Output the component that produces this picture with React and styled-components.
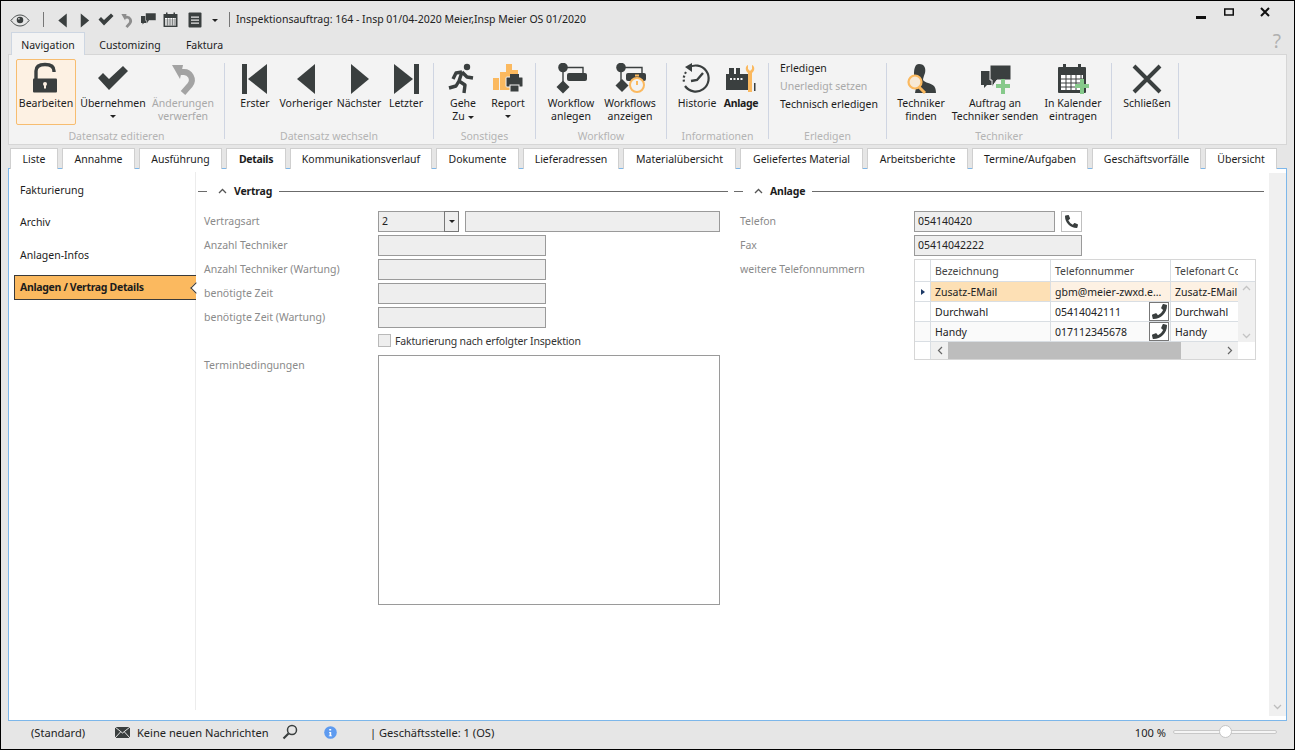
import React from 'react';
import styled, { createGlobalStyle } from 'styled-components';
import { FaPhoneAlt } from 'react-icons/fa';

const DARK = '#3a3f3f';
const ORANGE = '#fbb95f';
const GREEN = '#86c98a';

const Global = createGlobalStyle`
  html, body {
    margin: 0;
    padding: 0;
    overflow: hidden;
    background: #e6e6e6;
  }
  * {
    box-sizing: border-box;
  }
`;

const Window = styled.div`
  width: 1295px;
  height: 750px;
  border: 1px solid #000;
  background: #e6e6e6;
  display: flex;
  flex-direction: column;
  font-family: 'Noto Sans', 'Open Sans', sans-serif;
  font-size: 10.5px;
  color: #1c1c1c;
  overflow: hidden;
`;

const TitleBar = styled.div`
  height: 31px;
  flex: none;
  display: flex;
  align-items: center;
  padding-left: 8px;
`;
const QuickBtn = styled.span`
  display: flex;
  justify-content: center;
  align-items: center;
  width: ${(p) => p.$w || 22}px;
  height: 20px;
  margin-top: 7px;
`;
const TitleSep = styled.span`
  width: 1px;
  height: 15px;
  margin: 5px ${(p) => p.$r || 0}px 0 ${(p) => p.$l || 0}px;
  background: #777;
`;
const TitleText = styled.span`
  margin-top: 4px;
  font-size: 10.5px;
  color: #222;
`;
const WinButtons = styled.div`
  margin-left: auto;
  margin-right: 24px;
  margin-top: -9px;
  display: flex;
  align-items: center;
`;
const WinButton = styled.span`
  display: flex;
  margin-left: ${(p) => p.$l || 0}px;
`;

const MenuTabs = styled.div`
  height: 23px;
  flex: none;
  display: flex;
  align-items: stretch;
  padding-left: 10px;
  margin-bottom: -1px;
  z-index: 1;
`;
const MenuTab = styled.div`
  width: ${(p) => p.$w}px;
  display: flex;
  align-items: center;
  justify-content: center;
  padding-top: 2px;
  background: ${(p) => (p.$active ? '#f3f3f3' : 'transparent')};
  border: 1px solid ${(p) => (p.$active ? '#cdd6e2' : 'transparent')};
  border-bottom: none;
`;
const Help = styled.span`
  margin-left: auto;
  margin-right: 13px;
  margin-top: -4px;
  color: #b0b0b0;
  font-size: 19px;
`;

const Ribbon = styled.div`
  height: 91px;
  flex: none;
  margin: 0 7px;
  background: #f3f3f3;
  border: 1px solid #d6d6d6;
  display: flex;
`;
const Group = styled.div`
  width: ${(p) => p.$w}px;
  display: flex;
  flex-direction: column;
  padding-top: 4px;
`;
const GroupButtons = styled.div`
  flex: 1;
  display: flex;
  align-items: flex-start;
  padding-left: ${(p) => p.$pl || 0}px;
  gap: ${(p) => p.$gap || 0}px;
`;
const GroupLabel = styled.div`
  height: 15px;
  text-align: center;
  color: #b4b4b4;
`;
const GroupSep = styled.div`
  width: 1px;
  flex: none;
  margin: 8px 0 5px;
  background: #cfd5e2;
`;
const RibbonBtn = styled.div`
  width: ${(p) => p.$w}px;
  height: 66px;
  display: flex;
  flex-direction: column;
  align-items: center;
  text-align: center;
  line-height: 13px;
  border: 1px solid ${(p) => (p.$active ? '#f7bd70' : 'transparent')};
  border-radius: 2px;
  background: ${(p) => (p.$active ? '#fdf1e3' : 'transparent')};
  color: ${(p) => (p.$disabled ? '#a9a9a9' : '#1c1c1c')};
  font-weight: ${(p) => (p.$bold ? 700 : 400)};
  letter-spacing: ${(p) => (p.$bold ? '-0.3px' : 'normal')};
  white-space: nowrap;
`;
const IconSlot = styled.div`
  height: 37px;
  flex: none;
  display: flex;
  align-items: center;
  justify-content: center;
`;
const Caret = styled.span`
  display: inline-block;
  width: 0;
  height: 0;
  border: 3px solid transparent;
  border-top: 3px solid #222;
  border-bottom: none;
  margin: ${(p) => p.$m || '0'};
  vertical-align: middle;
`;
const TextActions = styled.div`
  flex: 1;
  display: flex;
  flex-direction: column;
  padding-left: 11px;
`;
const TextAction = styled.div`
  height: 18px;
  line-height: 18px;
  color: ${(p) => (p.$disabled ? '#a9a9a9' : '#1c1c1c')};
`;

const DocTabs = styled.div`
  height: 24px;
  flex: none;
  display: flex;
  gap: 4px;
  padding: 3px 0 0 9px;
  margin-bottom: -1px;
  z-index: 1;
`;
const DocTab = styled.div`
  width: ${(p) => p.$w}px;
  display: flex;
  align-items: center;
  justify-content: center;
  background: #fff;
  border: 1px solid #cfcfcf;
  border-bottom: none;
  font-weight: ${(p) => (p.$active ? 700 : 400)};
  letter-spacing: ${(p) => (p.$active ? '-0.3px' : 'normal')};
`;

const Panel = styled.div`
  flex: 1;
  min-height: 0;
  margin: 0 7px;
  background: #fff;
  border: 1px solid #7db7ea;
  display: flex;
`;
const Sidebar = styled.div`
  width: 187px;
  flex: none;
  margin: 3px 0 10px;
  padding: 5px 0 0 5px;
  border-right: 1px solid #ececec;
  display: flex;
  flex-direction: column;
  gap: 7.5px;
`;
const SideItem = styled.div`
  height: 25px;
  display: flex;
  align-items: center;
  padding-left: 6px;
  position: relative;
  margin-right: -1px;
  ${(p) =>
    p.$active &&
    `
    background: ${ORANGE};
    border: 1px solid #3a3a3a;
    border-right: none;
    padding-left: 5px;
    font-weight: 700;
    letter-spacing: -0.32px;
    &::after {
      content: '';
      position: absolute;
      right: -4px;
      top: 8px;
      width: 7px;
      height: 7px;
      background: #fff;
      border-left: 1px solid #3a3a3a;
      border-bottom: 1px solid #3a3a3a;
      transform: rotate(45deg);
    }
  `}
`;
const Content = styled.div`
  flex: 1;
  display: flex;
  padding: 14px 0 0 2px;
  gap: 6px;
`;
const Section = styled.div`
  width: 530px;
  flex: none;
`;
const SectionHead = styled.div`
  display: flex;
  align-items: center;
  height: 16px;
  font-weight: 700;
  letter-spacing: -0.2px;
  margin-bottom: 12px;
  &::before {
    content: '';
    width: 9px;
    height: 1px;
    background: #6b6b6b;
  }
  &::after {
    content: '';
    flex: 1;
    height: 1px;
    background: #6b6b6b;
  }
`;
const Chevron = styled.span`
  display: flex;
  margin: 0 7px 0 11px;
`;
const HeadText = styled.span`
  margin-right: 7px;
`;
const FormBody = styled.div`
  padding-left: 6px;
  display: flex;
  flex-direction: column;
  gap: 3px;
`;
const Row = styled.div`
  display: flex;
  min-height: 21px;
`;
const Label = styled.div`
  width: 174px;
  flex: none;
  color: #8a8a8a;
  line-height: 21px;
`;
const Input = styled.div`
  width: ${(p) => p.$w}px;
  height: ${(p) => p.$h || 21}px;
  flex: none;
  padding-left: 3px;
  line-height: 19px;
  background: ${(p) => (p.$white ? '#fff' : '#eeeeee')};
  border: 1px solid #9a9a9a;
  color: #222;
`;
const ComboArrow = styled.div`
  width: 15px;
  height: 21px;
  flex: none;
  margin-left: -1px;
  margin-right: 6px;
  background: #eee;
  border: 1px solid #777;
  display: flex;
  align-items: center;
  justify-content: center;
`;
const CheckRow = styled.div`
  display: flex;
  align-items: center;
  gap: 4px;
  margin: 2px 0 4px 174px;
  height: 15px;
  color: #333;
  letter-spacing: -0.16px;
`;
const CheckBox = styled.span`
  width: 13px;
  height: 13px;
  background: #eee;
  border: 1px solid #b9b9b9;
`;
const PhoneBtn = styled.div`
  width: 21px;
  height: 21px;
  margin-left: 6px;
  background: #fff;
  border: 1px solid #bfbfbf;
  display: flex;
  align-items: center;
  justify-content: center;
`;
const PhoneIcon = styled(FaPhoneAlt)`
  color: ${DARK};
  transform: ${(p) => (p.$flip ? 'scaleX(-1)' : 'none')};
`;

const Grid = styled.div`
  width: 342px;
  border: 1px solid #d6d6d6;
  display: flex;
  background: #fff;
`;
const GridMain = styled.div`
  width: 323px;
  flex: none;
`;
const GridRow = styled.div`
  display: flex;
  height: ${(p) => p.$h || 20}px;
  border-bottom: 1px solid #d9dee3;
  background: ${(p) => p.$bg || '#fff'};
`;
const Cell = styled.div`
  width: ${(p) => p.$w}px;
  flex: none;
  display: flex;
  align-items: center;
  padding-left: ${(p) => (p.$head ? 0 : 4)}px;
  border-right: ${(p) => (p.$last ? 'none' : '1px solid #d9dee3')};
  background: ${(p) => p.$bg || 'transparent'};
  color: ${(p) => p.$color || '#222'};
  overflow: hidden;
  white-space: nowrap;
  justify-content: ${(p) => (p.$head ? 'center' : 'space-between')};
`;
const CellPhone = styled.span`
  width: 20px;
  height: 19px;
  margin-right: 1px;
  flex: none;
  background: #fff;
  border: 1px solid #777;
  display: flex;
  align-items: center;
  justify-content: center;
`;
const Pointer = styled.span`
  width: 0;
  height: 0;
  border: 3.5px solid transparent;
  border-left: 4px solid #1d3a66;
  border-right: none;
`;
const HScroll = styled.div`
  height: 17px;
  display: flex;
`;
const HCorner = styled.div`
  width: 16px;
  flex: none;
  border-right: 1px solid #d9dee3;
`;
const HTrack = styled.div`
  flex: 1;
  display: flex;
  align-items: center;
  background: #f0f0f0;
`;
const HArrow = styled.span`
  width: 17px;
  flex: none;
  display: flex;
  justify-content: center;
`;
const HThumb = styled.div`
  width: 233px;
  height: 100%;
  margin-right: auto;
  background: #bdbdbd;
`;
const VScroll = styled.div`
  flex: 1;
  display: flex;
  flex-direction: column;
`;
const VHead = styled.div`
  height: 22px;
  border-bottom: 1px solid #d9dee3;
`;
const VTrack = styled.div`
  flex: 1;
  background: #f0f0f0;
  display: flex;
  flex-direction: column;
  justify-content: space-between;
  align-items: center;
  padding: 3px 0;
`;
const VCorner = styled.div`
  height: 17px;
`;
const PanelScroll = styled.div`
  width: 17px;
  flex: none;
  margin: 4px 0;
  background: #f0f0f0;
  display: flex;
  flex-direction: column;
  justify-content: flex-end;
  align-items: center;
  padding-bottom: 6px;
`;

const StatusBar = styled.div`
  height: 28px;
  flex: none;
  display: flex;
  align-items: center;
  padding: 0 17px 6px 30px;
  color: #222;
  font-size: 11.1px;
`;
const StatusItem = styled.div`
  display: flex;
  align-items: center;
  width: ${(p) => (p.$w ? `${p.$w}px` : 'auto')};
  flex: none;
  gap: 7px;
`;
const Zoom = styled.div`
  margin-left: auto;
  display: flex;
  align-items: center;
  gap: 7px;
`;
const Slider = styled.div`
  width: 104px;
  height: 4px;
  border: 1px solid #c8c8c8;
  border-radius: 2px;
  background: #f5f5f5;
  position: relative;
`;
const Thumb = styled.span`
  position: absolute;
  left: 45px;
  top: -6px;
  width: 13px;
  height: 13px;
  border-radius: 50%;
  background: #fff;
  border: 1px solid #c4c4c4;
`;

const Svg = ({ s = 32, w, h, vb = '0 0 32 32', children }) => (
  <svg width={w || s} height={h || s} viewBox={vb} aria-hidden="true">
    {children}
  </svg>
);

const EyeIcon = () => (
  <Svg w={20} h={13} vb="0 0 22 14">
    <path d="M1 7C5 2 8 1 11 1s6 1 10 6c-4 5-7 6-10 6S5 12 1 7z" fill="none" stroke={DARK} strokeWidth="1" />
    <circle cx="11" cy="6.5" r="3.6" fill={DARK} />
    <circle cx="9.8" cy="5.2" r="0.9" fill="#e6e6e6" />
  </Svg>
);
const TriLeft = ({ s = 32 }) => (
  <Svg s={s}>
    <polygon points="25,1 25,31 7,16" fill={DARK} />
  </Svg>
);
const TriRight = ({ s = 32 }) => (
  <Svg s={s}>
    <polygon points="8,1 8,31 26,16" fill={DARK} />
  </Svg>
);
const First = () => (
  <Svg>
    <rect x="3" y="1" width="5" height="30" fill={DARK} />
    <polygon points="28,1 28,31 9,16" fill={DARK} />
  </Svg>
);
const Last = () => (
  <Svg>
    <rect x="24" y="1" width="5" height="30" fill={DARK} />
    <polygon points="4,1 4,31 23,16" fill={DARK} />
  </Svg>
);
const Check = ({ s = 32 }) => (
  <Svg s={s}>
    <polygon points="1,15 6,10 12,16 26,3 31,8 12,27" fill={DARK} />
  </Svg>
);
const Undo = ({ s = 32, c = '#a3a3a3' }) => (
  <Svg s={s}>
    <path d="M11 9h5a8 8 0 0 1 7 13l-7 8" fill="none" stroke={c} strokeWidth="6" />
    <polygon points="5,2 16,2 13,16" fill={c} />
  </Svg>
);
const Chat = ({ s = 32, plus }) => (
  <Svg s={s}>
    <path d="M2 8h13v14H8l-3 3v-3H2z" fill={DARK} />
    <path d="M11 2h21v15H18l-5 7v-7h-2z" fill={DARK} stroke="#f3f3f3" strokeWidth="1" />
    {plus && <path d="M22 16h4v5h5v4h-5v6h-4v-6h-5v-4h5z" fill={GREEN} />}
  </Svg>
);
const Calendar = ({ s = 32, plus }) => (
  <Svg s={s}>
    <rect x="1" y="4" width="28" height="26" rx="1" fill={DARK} />
    <rect x="6" y="1" width="3" height="5" fill={DARK} />
    <rect x="21" y="1" width="3" height="5" fill={DARK} />
    <path d="M4 12h22v15H4z" fill="#fff" />
    <path d="M4 16h22M4 20h22M4 24h22M9 12v15M14 12v15M19 12v15M24 12v15" stroke={DARK} strokeWidth="1" />
    {plus && <path d="M23 16h4v5h5v4h-5v6h-4v-6h-5v-4h5z" fill={GREEN} />}
  </Svg>
);
const ListDoc = ({ s = 16 }) => (
  <Svg s={s}>
    <rect x="3" y="1" width="26" height="30" rx="2" fill={DARK} />
    <path d="M8 10h16M8 16h16M8 22h16" stroke="#e6e6e6" strokeWidth="2.5" />
  </Svg>
);
const Lock = () => (
  <Svg s={34} vb="0 0 34 34">
    <path d="M7 17V9c0-4 3-6.5 9-6.5s9 2.5 9 6.5v1" fill="none" stroke={DARK} strokeWidth="3.4" />
    <rect x="4" y="16.5" width="24" height="14" rx="1" fill={DARK} />
    <circle cx="16" cy="22" r="2" fill="#fdf1e3" />
    <rect x="15" y="22" width="2" height="4.5" fill="#fdf1e3" />
  </Svg>
);
const Runner = () => (
  <Svg>
    <circle cx="20" cy="4" r="3.2" fill={DARK} />
    <path d="M15 9l-3 9 6 4 -1 8M12 18l-3 5-7 2M15 9l5 5 6 1M15 9l-6 1-3 6" fill="none" stroke={DARK} strokeWidth="3.4" strokeLinejoin="round" />
  </Svg>
);
const Report = () => (
  <Svg>
    <rect x="1" y="15" width="6" height="12" fill={ORANGE} />
    <rect x="8" y="9" width="6" height="18" fill={ORANGE} />
    <rect x="14" y="1" width="6" height="26" fill={ORANGE} />
    <rect x="20" y="7" width="6" height="6" fill={ORANGE} />
    <rect x="14" y="14" width="17" height="10" rx="1" fill={DARK} stroke="#f3f3f3" />
    <rect x="18" y="11" width="9" height="4" fill={DARK} />
    <rect x="18" y="22" width="9" height="7" fill={DARK} stroke="#f3f3f3" />
  </Svg>
);
const FlowNew = () => (
  <Svg>
    <path d="M8 4.5V24M8 4.5H28V11" fill="none" stroke={DARK} strokeWidth="1.4" />
    <circle cx="8" cy="4.5" r="4.8" fill={DARK} />
    <rect x="12" y="10" width="20" height="8" rx="2" fill={DARK} />
    <polygon points="8,17.5 14.5,24 8,30.5 1.5,24" fill={DARK} />
  </Svg>
);
const FlowShow = () => (
  <Svg>
    <path d="M7 4.5V22M7 4.5H28V11" fill="none" stroke={DARK} strokeWidth="1.4" />
    <circle cx="7" cy="4.5" r="4.8" fill={DARK} />
    <rect x="12" y="10" width="20" height="8" rx="2" fill={DARK} />
    <polygon points="8,16 14.5,22.5 8,29 1.5,22.5" fill={DARK} />
    <circle cx="23" cy="22" r="7" fill="#f3f3f3" stroke={ORANGE} strokeWidth="2" />
    <path d="M23 22v-4M21 12.5h4" fill="none" stroke={ORANGE} strokeWidth="2" />
  </Svg>
);
const History = () => (
  <Svg>
    <path d="M7 5a13 13 0 1 1-3 18" fill="none" stroke={DARK} strokeWidth="2.2" />
    <path d="M5 9a13 13 0 0 0-2 10" fill="none" stroke={DARK} strokeWidth="2.2" strokeDasharray="2 2" />
    <polygon points="11,0 11,9 4,4" fill={DARK} />
    <path d="M22 10l-6 7-6 1" fill="none" stroke={DARK} strokeWidth="2.4" />
  </Svg>
);
const Machine = () => (
  <Svg>
    <rect x="4" y="5" width="5" height="6" fill={DARK} />
    <rect x="11" y="5" width="4" height="6" fill={DARK} />
    <rect x="1" y="11" width="22" height="16" fill={DARK} />
    <path d="M5 16h14" stroke="#f3f3f3" strokeWidth="2" strokeDasharray="2 1.5" />
    <path d="M27 2v4l-2 2-2-2V2c-3 1-3 6 0 8v19h4V10c3-2 3-7 0-8z" fill={ORANGE} />
    <rect x="29" y="20" width="1.5" height="8" fill={DARK} />
  </Svg>
);
const Person = () => (
  <Svg>
    <path d="M14 1c6 0 7 5 6 9-1 3-2 5-2 7 2 3 8 3 11 6 2 2 2 7 2 7H10l2-11c-2-2-3-5-3-8 0-5 1-10 5-10z" fill={DARK} />
    <circle cx="10" cy="19" r="6.5" fill="#f7e9d6" stroke={ORANGE} strokeWidth="2.2" />
    <path d="M14 24l6 6" stroke={ORANGE} strokeWidth="3" />
  </Svg>
);
const Cross = () => (
  <Svg>
    <path d="M3 3l26 26M29 3L3 29" stroke={DARK} strokeWidth="4" />
  </Svg>
);
const ChevUp = ({ c = '#555', flip }) => (
  <Svg w={9} h={6} vb="0 0 9 6">
    <path d={flip ? 'M1 1l3.5 3.5L8 1' : 'M1 5l3.5-3.5L8 5'} fill="none" stroke={c} strokeWidth="1.3" />
  </Svg>
);
const ChevSide = ({ right }) => (
  <Svg w={6} h={9} vb="0 0 6 9">
    <path d={right ? 'M1 1l3.5 3.5L1 8' : 'M5 1L1.5 4.5 5 8'} fill="none" stroke="#666" strokeWidth="1.2" />
  </Svg>
);
const Mail = () => (
  <Svg w={15} h={11} vb="0 0 15 11">
    <rect width="15" height="11" fill={DARK} />
    <path d="M0 0l7.5 6L15 0M0 11l5.5-6M15 11L9.5 5" fill="none" stroke="#e6e6e6" strokeWidth="1" />
  </Svg>
);
const Search = () => (
  <Svg s={16} vb="0 0 16 16">
    <circle cx="10" cy="6" r="4.5" fill="none" stroke={DARK} strokeWidth="1.5" />
    <path d="M6.5 9.5L1.5 14.5" stroke={DARK} strokeWidth="2.2" />
  </Svg>
);
const Info = () => (
  <Svg s={13} vb="0 0 13 13">
    <circle cx="6.5" cy="6.5" r="6.3" fill="#5e9bf0" />
    <path d="M5.2 3h2v1.5h-2zM5 6h2.2v3.5H8v.8H4.8v-.8h.8V6.8H5z" fill="#fff" />
  </Svg>
);

const buttons = {
  edit: [
    { w: 60, icon: <Lock />, label: 'Bearbeiten', active: true },
    { w: 66, icon: <Check />, label: 'Übernehmen', caret: true },
    { w: 66, icon: <Undo />, label: 'Änderungen\nverwerfen', disabled: true },
  ],
  nav: [
    { w: 50, icon: <First />, label: 'Erster' },
    { w: 52, icon: <TriLeft />, label: 'Vorheriger' },
    { w: 54, icon: <TriRight />, label: 'Nächster' },
    { w: 40, icon: <Last />, label: 'Letzter' },
  ],
  misc: [
    { w: 44, icon: <Runner />, label: 'Gehe', second: 'Zu' },
    { w: 46, icon: <Report />, label: 'Report', caret: true },
  ],
  flow: [
    { w: 58, icon: <FlowNew />, label: 'Workflow\nanlegen' },
    { w: 60, icon: <FlowShow />, label: 'Workflows\nanzeigen' },
  ],
  info: [
    { w: 46, icon: <History />, label: 'Historie' },
    { w: 42, icon: <Machine />, label: 'Anlage', bold: true },
  ],
  tech: [
    { w: 56, icon: <Person />, label: 'Techniker\nfinden' },
    { w: 92, icon: <Chat plus />, label: 'Auftrag an\nTechniker senden' },
    { w: 64, icon: <Calendar plus />, label: 'In Kalender\neintragen' },
  ],
  close: [{ w: 60, icon: <Cross />, label: 'Schließen' }],
};

const docTabs = [
  ['Liste', 48],
  ['Annahme', 73],
  ['Ausführung', 83],
  ['Details', 60, true],
  ['Kommunikationsverlauf', 142],
  ['Dokumente', 83],
  ['Lieferadressen', 96],
  ['Materialübersicht', 113],
  ['Geliefertes Material', 123],
  ['Arbeitsberichte', 101],
  ['Termine/Aufgaben', 116],
  ['Geschäftsvorfälle', 109],
  ['Übersicht', 72],
];

const phoneRows = [
  { name: 'Durchwahl', number: '05414042111', kind: 'Durchwahl', bg: '#fff' },
  { name: 'Handy', number: '017112345678', kind: 'Handy', bg: '#fafafa' },
];

const RibbonButtons = ({ items }) =>
  items.map((b) => (
    <RibbonBtn key={b.label} $w={b.w} $active={b.active} $disabled={b.disabled} $bold={b.bold}>
      <IconSlot>{b.icon}</IconSlot>
      {b.label.split('\n').map((l) => (
        <div key={l}>{l}</div>
      ))}
      {b.second && (
        <div>
          {b.second}
          <Caret $m="0 0 0 3px" />
        </div>
      )}
      {b.caret && <Caret $m="5px 0 0" />}
    </RibbonBtn>
  ));

const App = () => (
  <>
    <Global />
    <Window>
      <TitleBar>
        <QuickBtn $w={22}>
          <EyeIcon />
        </QuickBtn>
        <TitleSep $l={12} $r={8} />
        <QuickBtn $w={21}>
          <TriLeft s={15} />
        </QuickBtn>
        <QuickBtn $w={22}>
          <TriRight s={15} />
        </QuickBtn>
        <QuickBtn $w={21}>
          <Check s={16} />
        </QuickBtn>
        <QuickBtn $w={21}>
          <Undo s={15} c="#8d8d8d" />
        </QuickBtn>
        <QuickBtn $w={22}>
          <Chat s={16} />
        </QuickBtn>
        <QuickBtn $w={24}>
          <Calendar s={16} />
        </QuickBtn>
        <QuickBtn $w={24}>
          <ListDoc />
        </QuickBtn>
        <QuickBtn $w={15}>
          <Caret />
        </QuickBtn>
        <TitleSep $l={7} $r={6} />
        <TitleText>Inspektionsauftrag: 164 - Insp 01/04-2020 Meier,Insp Meier OS 01/2020</TitleText>
        <WinButtons>
          <WinButton>
            <Svg w={10} h={14} vb="0 0 10 14">
              <rect y="11" width="10" height="3" fill="#111" />
            </Svg>
          </WinButton>
          <WinButton $l={18}>
            <Svg w={10} h={8} vb="0 0 10 8">
              <path d="M.75 1h8.5v6H.75z" fill="none" stroke="#111" strokeWidth="1.5" />
            </Svg>
          </WinButton>
          <WinButton $l={26}>
            <Svg w={10} h={10} vb="0 0 10 10">
              <path d="M1 1l8 8M9 1l-8 8" stroke="#111" strokeWidth="2" />
            </Svg>
          </WinButton>
        </WinButtons>
      </TitleBar>

      <MenuTabs>
        <MenuTab $w={74} $active>
          Navigation
        </MenuTab>
        <MenuTab $w={90}>Customizing</MenuTab>
        <MenuTab $w={59}>Faktura</MenuTab>
        <Help>?</Help>
      </MenuTabs>

      <Ribbon>
        <Group $w={215}>
          <GroupButtons $pl={7} $gap={4}>
            <RibbonButtons items={buttons.edit} />
          </GroupButtons>
          <GroupLabel>Datensatz editieren</GroupLabel>
        </Group>
        <GroupSep />
        <Group $w={208}>
          <GroupButtons $pl={5}>
            <RibbonButtons items={buttons.nav} />
          </GroupButtons>
          <GroupLabel>Datensatz wechseln</GroupLabel>
        </Group>
        <GroupSep />
        <Group $w={101}>
          <GroupButtons $pl={7}>
            <RibbonButtons items={buttons.misc} />
          </GroupButtons>
          <GroupLabel>Sonstiges</GroupLabel>
        </Group>
        <GroupSep />
        <Group $w={130}>
          <GroupButtons $pl={6}>
            <RibbonButtons items={buttons.flow} />
          </GroupButtons>
          <GroupLabel>Workflow</GroupLabel>
        </Group>
        <GroupSep />
        <Group $w={101}>
          <GroupButtons $pl={7}>
            <RibbonButtons items={buttons.info} />
          </GroupButtons>
          <GroupLabel>Informationen</GroupLabel>
        </Group>
        <GroupSep />
        <Group $w={117}>
          <TextActions>
            <TextAction>Erledigen</TextAction>
            <TextAction $disabled>Unerledigt setzen</TextAction>
            <TextAction>Technisch erledigen</TextAction>
          </TextActions>
          <GroupLabel>Erledigen</GroupLabel>
        </Group>
        <GroupSep />
        <Group $w={224}>
          <GroupButtons $pl={6}>
            <RibbonButtons items={buttons.tech} />
          </GroupButtons>
          <GroupLabel>Techniker</GroupLabel>
        </Group>
        <GroupSep />
        <Group $w={66}>
          <GroupButtons $pl={5}>
            <RibbonButtons items={buttons.close} />
          </GroupButtons>
          <GroupLabel />
        </Group>
        <GroupSep />
      </Ribbon>

      <DocTabs>
        {docTabs.map(([label, w, active]) => (
          <DocTab key={label} $w={w} $active={active}>
            {label}
          </DocTab>
        ))}
      </DocTabs>

      <Panel>
        <Sidebar>
          <SideItem>Fakturierung</SideItem>
          <SideItem>Archiv</SideItem>
          <SideItem>Anlagen-Infos</SideItem>
          <SideItem $active>Anlagen / Vertrag Details</SideItem>
        </Sidebar>
        <Content>
          <Section>
            <SectionHead>
              <Chevron>
                <ChevUp />
              </Chevron>
              <HeadText>Vertrag</HeadText>
            </SectionHead>
            <FormBody>
              <Row>
                <Label>Vertragsart</Label>
                <Input $w={67}>2</Input>
                <ComboArrow>
                  <Caret />
                </ComboArrow>
                <Input $w={255} />
              </Row>
              <Row>
                <Label>Anzahl Techniker</Label>
                <Input $w={168} />
              </Row>
              <Row>
                <Label>Anzahl Techniker (Wartung)</Label>
                <Input $w={168} />
              </Row>
              <Row>
                <Label>benötigte Zeit</Label>
                <Input $w={168} />
              </Row>
              <Row>
                <Label>benötigte Zeit (Wartung)</Label>
                <Input $w={168} />
              </Row>
              <CheckRow>
                <CheckBox />
                Fakturierung nach erfolgter Inspektion
              </CheckRow>
              <Row>
                <Label>Terminbedingungen</Label>
                <Input $w={342} $h={250} $white />
              </Row>
            </FormBody>
          </Section>
          <Section>
            <SectionHead>
              <Chevron>
                <ChevUp />
              </Chevron>
              <HeadText>Anlage</HeadText>
            </SectionHead>
            <FormBody>
              <Row>
                <Label>Telefon</Label>
                <Input $w={141}>054140420</Input>
                <PhoneBtn>
                  <PhoneIcon size={13} />
                </PhoneBtn>
              </Row>
              <Row>
                <Label>Fax</Label>
                <Input $w={168}>05414042222</Input>
              </Row>
              <Row>
                <Label>weitere Telefonnummern</Label>
                <Grid>
                  <GridMain>
                    <GridRow $h={22}>
                      <Cell $w={16} $head />
                      <Cell $w={120} $color="#444">
                        Bezeichnung
                      </Cell>
                      <Cell $w={120} $color="#444">
                        Telefonnummer
                      </Cell>
                      <Cell $w={67} $color="#444" $last>
                        Telefonart Code
                      </Cell>
                    </GridRow>
                    <GridRow>
                      <Cell $w={16} $head>
                        <Pointer />
                      </Cell>
                      <Cell $w={120} $bg="#fde0b5">
                        Zusatz-EMail
                      </Cell>
                      <Cell $w={120} $bg="#fdf1e3">
                        gbm@meier-zwxd.e...
                      </Cell>
                      <Cell $w={67} $bg="#fdf1e3" $last>
                        Zusatz-EMail
                      </Cell>
                    </GridRow>
                    {phoneRows.map((r) => (
                      <GridRow key={r.name} $bg={r.bg}>
                        <Cell $w={16} $head />
                        <Cell $w={120}>{r.name}</Cell>
                        <Cell $w={120}>
                          {r.number}
                          <CellPhone>
                            <PhoneIcon size={15} $flip />
                          </CellPhone>
                        </Cell>
                        <Cell $w={67} $last>
                          {r.kind}
                        </Cell>
                      </GridRow>
                    ))}
                    <HScroll>
                      <HCorner />
                      <HTrack>
                        <HArrow>
                          <ChevSide />
                        </HArrow>
                        <HThumb />
                        <HArrow>
                          <ChevSide right />
                        </HArrow>
                      </HTrack>
                    </HScroll>
                  </GridMain>
                  <VScroll>
                    <VHead />
                    <VTrack>
                      <ChevUp c="#c4c4c4" />
                      <ChevUp c="#c4c4c4" flip />
                    </VTrack>
                    <VCorner />
                  </VScroll>
                </Grid>
              </Row>
            </FormBody>
          </Section>
        </Content>
        <PanelScroll>
          <ChevUp c="#bdbdbd" flip />
        </PanelScroll>
      </Panel>

      <StatusBar>
        <StatusItem $w={84}>(Standard)</StatusItem>
        <StatusItem $w={167}>
          <Mail />
          Keine neuen Nachrichten
        </StatusItem>
        <StatusItem $w={42}>
          <Search />
        </StatusItem>
        <StatusItem $w={46}>
          <Info />
        </StatusItem>
        <StatusItem>| Geschäftsstelle: 1 (OS)</StatusItem>
        <Zoom>
          100 %
          <Slider>
            <Thumb />
          </Slider>
        </Zoom>
      </StatusBar>
    </Window>
  </>
);

export default App;
